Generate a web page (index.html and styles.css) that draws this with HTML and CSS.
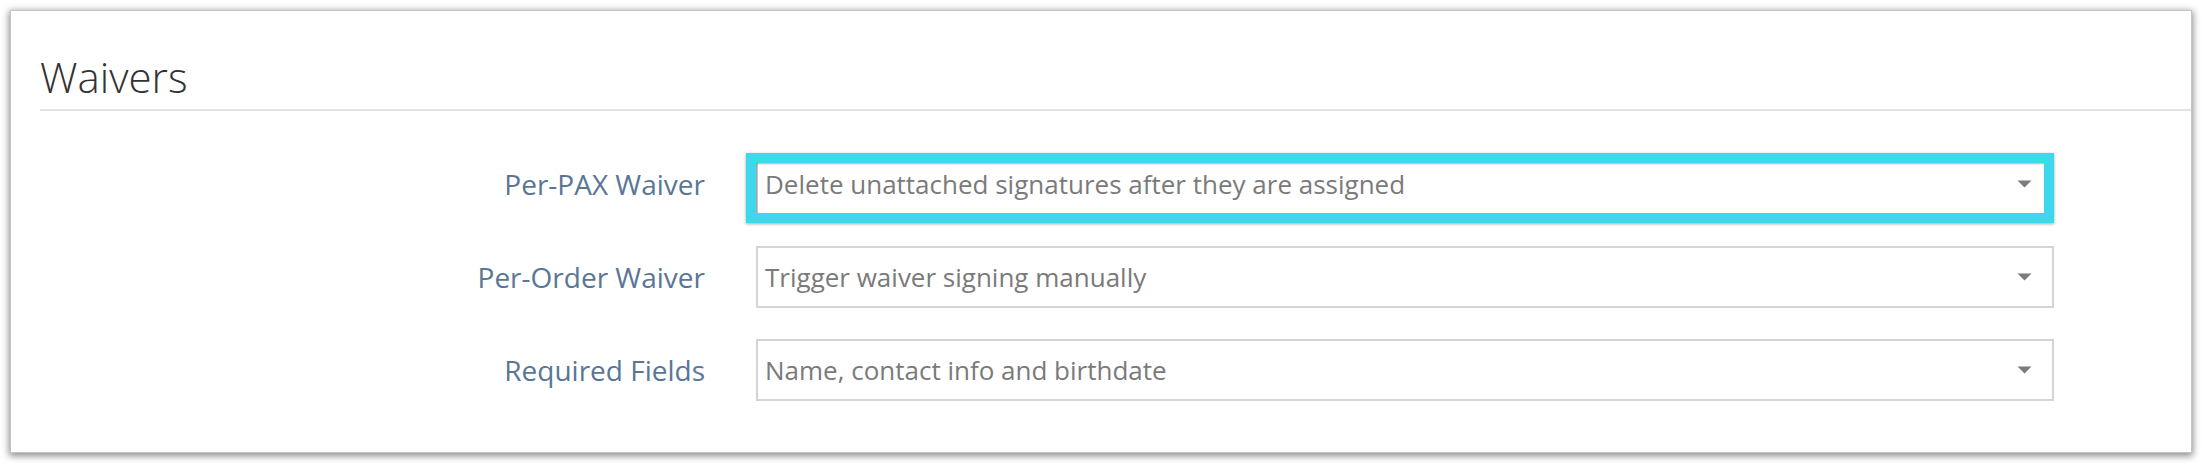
FILE: index.html
```html
<!DOCTYPE html>
<html lang="en">
<head>
    <meta charset="UTF-8">
    <meta name="viewport" content="width=device-width, initial-scale=1.0">
    <title>Waivers</title>
    <link rel="stylesheet" href="styles.css">
</head>
<body>
    <div class="card">
        <div class="card-header">
            <h2>Waivers</h2>
        </div>

        <div class="form-grid">
            <label class="field-label">Per-PAX Waiver</label>
            <div class="select-wrap">
                <div class="select">
                    <span>Delete unattached signatures after they are assigned</span>
                    <svg class="caret" width="15" height="8" viewBox="0 0 15 8"><path d="M0.5 0.5 H14.5 L7.5 7.5 Z" fill="#7b7b7b"/></svg>
                </div>
                <!-- highlight box from the screenshot -->
                <div class="highlight"></div>
            </div>

            <label class="field-label">Per-Order Waiver</label>
            <div class="select-wrap">
                <div class="select">
                    <span>Trigger waiver signing manually</span>
                    <svg class="caret" width="15" height="8" viewBox="0 0 15 8"><path d="M0.5 0.5 H14.5 L7.5 7.5 Z" fill="#7b7b7b"/></svg>
                </div>
            </div>

            <label class="field-label">Required Fields</label>
            <div class="select-wrap">
                <div class="select">
                    <span>Name, contact info and birthdate</span>
                    <svg class="caret" width="15" height="8" viewBox="0 0 15 8"><path d="M0.5 0.5 H14.5 L7.5 7.5 Z" fill="#7b7b7b"/></svg>
                </div>
            </div>
        </div>
    </div>
</body>
</html>
```

FILE: styles.css
```css
body {
    font-family: "Open Sans", Arial, sans-serif;
    margin: 0;
    padding: 10px;
    background: #ffffff;
}

.card {
    height: 443px;
    box-sizing: border-box;
    background: #ffffff;
    border: 1px solid #c4c4c4;
    box-shadow: 0px 2px 7px 1px rgba(0, 0, 0, 0.45);
}

.card-header {
    margin-left: 29px;
    padding-top: 45px;
    padding-bottom: 11px;
    border-bottom: 2px solid #e4e4e4;
}

.card-header h2 {
    margin: 0;
    font-size: 42px;
    line-height: 42px;
    font-weight: 300;
    color: #333333;
}

.form-grid {
    display: grid;
    grid-template-columns: 694px 1298px;
    grid-auto-rows: 62px;
    column-gap: 51px;
    row-gap: 31px;
    margin-top: 42px;
}

.field-label {
    display: flex;
    align-items: center;
    justify-content: flex-end;
    font-size: 28px;
    color: #5a7696;
}

.select-wrap {
    position: relative;
}

.select {
    display: flex;
    align-items: center;
    justify-content: space-between;
    height: 100%;
    box-sizing: border-box;
    border: 2px solid #d4d4d4;
    padding: 0 20px 0 7px;
    font-size: 26px;
    color: #7a7a7a;
}

.caret {
    display: block;
}

.highlight {
    position: absolute;
    left: -10px;
    top: 0;
    width: 1308px;
    height: 70px;
    box-sizing: border-box;
    border: 10px solid #3ed8ec;
    box-shadow: 0px 1px 3px rgba(0, 0, 0, 0.35), inset 1px 1px 2px rgba(0, 0, 0, 0.3);
}
```
